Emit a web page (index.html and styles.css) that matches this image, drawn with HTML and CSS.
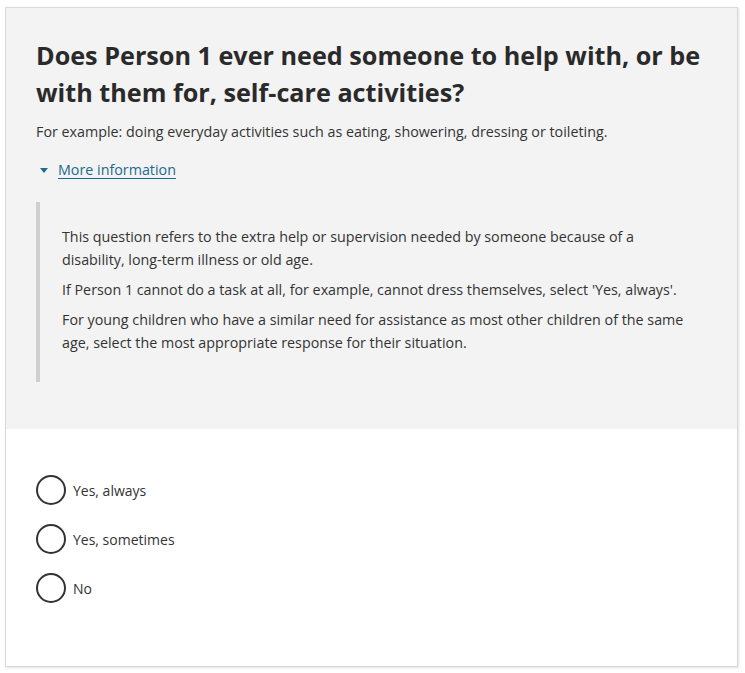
FILE: index.html
```html
<!DOCTYPE html>
<html lang="en">
<head>
<meta charset="utf-8">
<title>Self-care question</title>
<link rel="stylesheet" href="styles.css">
</head>
<body>
<div class="card">
  <div class="question">
    <h1 class="title">Does Person 1 ever need someone to help with, or be with them for, self-care activities?</h1>
    <p class="hint">For example: doing everyday activities such as eating, showering, dressing or toileting.</p>
    <div class="details">
      <div class="summary"><span class="caret"></span><a class="summary-link" href="#">More information</a></div>
      <div class="details-body">
        <p>This question refers to the extra help or supervision needed by someone because of a disability, long-term illness or old age.</p>
        <p>If Person 1 cannot do a task at all, for example, cannot dress themselves, select 'Yes, always'.</p>
        <p>For young children who have a similar need for assistance as most other children of the same age, select the most appropriate response for their situation.</p>
      </div>
    </div>
  </div>
  <div class="answers">
    <label class="option"><span class="radio"></span><span class="label">Yes, always</span></label>
    <label class="option"><span class="radio"></span><span class="label">Yes, sometimes</span></label>
    <label class="option"><span class="radio"></span><span class="label">No</span></label>
  </div>
</div>
</body>
</html>
```
FILE: styles.css
```css
* { box-sizing: border-box; }
html, body { margin: 0; height: 100%; }
body {
  padding: 7px 7px 6px 5px;
  background: #fff;
  font-family: "Open Sans", "Noto Sans", sans-serif;
  color: #333;
}
.card {
  height: 100%;
  border: 1px solid #d9d9d9;
  box-shadow: 1px 1px 2px rgba(0,0,0,0.12);
  background: #fff;
  display: flex;
  flex-direction: column;
}
.question {
  background: #f3f3f3;
  padding: 29px 30px 47px 30px;
}
.title {
  margin: 0;
  font-size: 25.2px;
  line-height: 37px;
  font-weight: 700;
  color: #2a2a2a;
}
.hint {
  margin: 9px 0 0 0;
  font-size: 14.3px;
  line-height: 23px;
  color: #333;
}
.summary {
  margin-top: 15px;
  display: flex;
  align-items: center;
  height: 23px;
}
.caret {
  width: 0;
  height: 0;
  border-left: 4px solid transparent;
  border-right: 4px solid transparent;
  border-top: 5px solid #1d6a8e;
  margin: 1px 0 0 4px;
}
.summary-link {
  margin-left: 10px;
  font-size: 14.3px;
  color: #1d6a8e;
  text-decoration: underline;
  text-underline-offset: 3px;
  text-decoration-thickness: 1px;
}
.details-body {
  margin-top: 21px;
  border-left: 4px solid #cfcfcf;
  padding: 23px 20px 28px 22px;
}
.details-body p {
  margin: 0 0 7px 0;
  font-size: 14.3px;
  line-height: 23px;
  color: #333;
}
.details-body p:last-child { margin-bottom: 0; }
.answers {
  flex: 1;
  padding: 46px 30px 0 30px;
  display: flex;
  flex-direction: column;
  gap: 19px;
}
.option {
  display: flex;
  align-items: center;
  height: 30px;
}
.radio {
  width: 30px;
  height: 30px;
  border: 2px solid #333;
  border-radius: 50%;
  background: #fff;
  flex: none;
}
.label {
  margin-left: 7px;
  font-size: 14px;
  color: #333;
}
```
